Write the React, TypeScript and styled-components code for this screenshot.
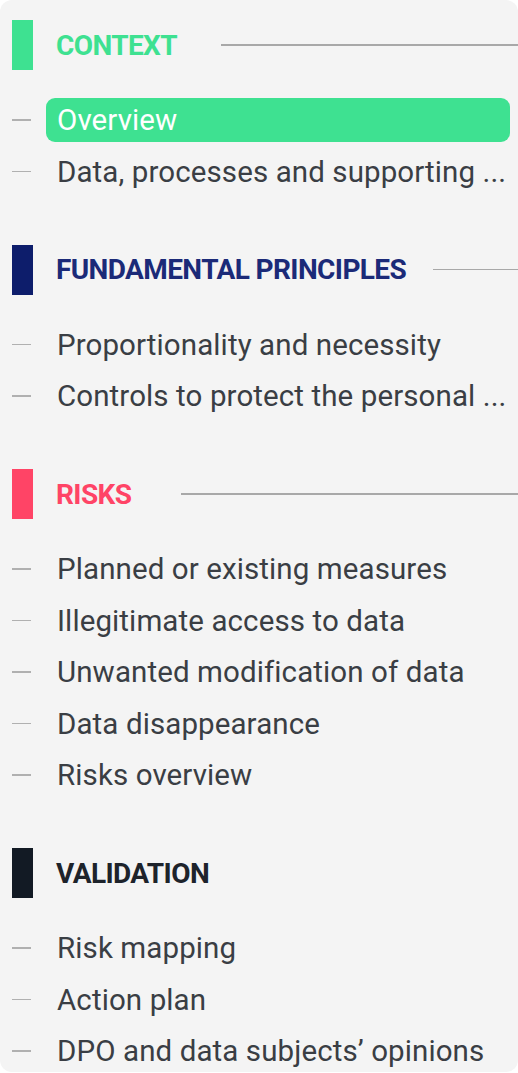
import styled, { createGlobalStyle } from 'styled-components';

interface Section {
  title: string;
  color: string;
  textColor: string;
  lineGap?: number;
  items: string[];
}

// labels come already shortened, the way the sidebar shows them
const SECTIONS: Section[] = [
  {
    title: 'Context',
    color: '#3ee191',
    textColor: '#3ee191',
    lineGap: 44,
    items: ['Overview', 'Data, processes and supporting ...'],
  },
  {
    title: 'Fundamental principles',
    color: '#0d1d6b',
    textColor: '#1b2a78',
    lineGap: 27,
    items: ['Proportionality and necessity', 'Controls to protect the personal ...'],
  },
  {
    title: 'Risks',
    color: '#ff4466',
    textColor: '#ff4466',
    lineGap: 50,
    items: [
      'Planned or existing measures',
      'Illegitimate access to data',
      'Unwanted modification of data',
      'Data disappearance',
      'Risks overview',
    ],
  },
  {
    title: 'Validation',
    color: '#121a24',
    textColor: '#1d232b',
    items: ['Risk mapping', 'Action plan', 'DPO and data subjects’ opinions'],
  },
];

const ACTIVE = 'Overview';

const App = () => (
  <>
    <GlobalStyle />
    <Panel>
      {SECTIONS.map((section) => (
        <Group key={section.title}>
          <Heading>
            <Bar color={section.color} />
            <Title color={section.textColor}>{section.title}</Title>
            {section.lineGap !== undefined && <Rule gap={section.lineGap} />}
          </Heading>
          <List>
            {section.items.map((item) => (
              <Item key={item}>
                <Dash />
                <Link active={item === ACTIVE}>{item}</Link>
              </Item>
            ))}
          </List>
        </Group>
      ))}
    </Panel>
  </>
);

export default App;

const GlobalStyle = createGlobalStyle`
  html, body {
    margin: 0;
    padding: 0;
    background: #ffffff;
  }
  body {
    font-family: Roboto, "Liberation Sans", sans-serif;
  }
`;

const Panel = styled.nav`
  width: 518px;
  height: 1072px;
  box-sizing: border-box;
  padding-top: 20px;
  background: #f4f4f4;
  border-radius: 12px;
  overflow: hidden;
  display: flex;
  flex-direction: column;
  gap: 51px;
`;

const Group = styled.section`
  display: flex;
  flex-direction: column;
  gap: 28px;
`;

const Heading = styled.div`
  display: flex;
  align-items: center;
  height: 50px;
  padding-left: 12px;
`;

const Bar = styled.span<{ color: string }>`
  width: 21px;
  height: 50px;
  flex: none;
  background: ${({ color }) => color};
`;

const Title = styled.h2<{ color: string }>`
  margin: 0 0 0 23px;
  font-size: 28px;
  font-weight: 700;
  letter-spacing: -0.6px;
  text-transform: uppercase;
  color: ${({ color }) => color};
  white-space: nowrap;
`;

const Rule = styled.span<{ gap: number }>`
  flex: 1;
  min-width: 0;
  height: 1.5px;
  margin-left: ${({ gap }) => gap}px;
  background: #a8a8a8;
`;

const List = styled.ul`
  list-style: none;
  margin: 0;
  padding: 0;
  display: flex;
  flex-direction: column;
  gap: 7.5px;
`;

const Item = styled.li`
  display: flex;
  align-items: center;
  height: 44px;
  padding: 0 8px 0 12px;
`;

const Dash = styled.span`
  width: 19px;
  height: 1.5px;
  flex: none;
  background: #b0b0b0;
`;

const Link = styled.a<{ active?: boolean }>`
  flex: 1;
  min-width: 0;
  margin-left: 15px;
  height: 44px;
  line-height: 44px;
  padding: 0 0 0 11px;
  border-radius: 9px;
  font-size: 29.5px;
  letter-spacing: 0.1px;
  color: ${({ active }) => (active ? '#ffffff' : '#3a3e44')};
  background: ${({ active }) => (active ? '#3ee191' : 'transparent')};
  white-space: nowrap;
  overflow: hidden;
  cursor: pointer;
`;
